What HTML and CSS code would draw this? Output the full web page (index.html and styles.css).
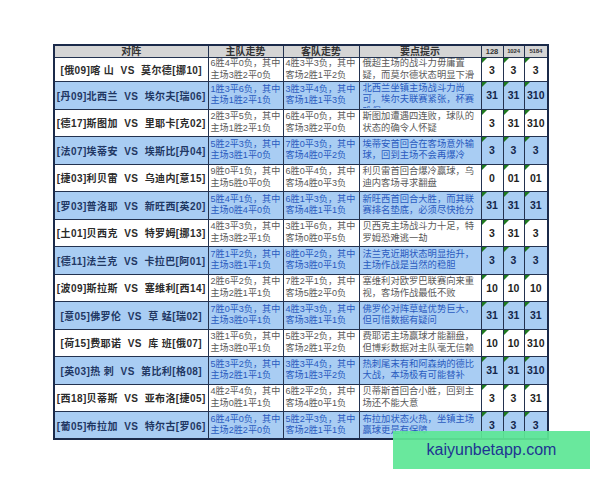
FILE: index.html
```html
<!DOCTYPE html>
<html lang="zh">
<head>
<meta charset="utf-8">
<title>对阵</title>
<link rel="stylesheet" href="styles.css">
</head>
<body>
<div class="page">
<table class="grid">
<colgroup>
<col class="w-m"><col class="w-h"><col class="w-a"><col class="w-t"><col class="w-n1"><col class="w-n2"><col class="w-n3">
</colgroup>
<thead>
<tr class="hd">
<th>对阵</th><th>主队走势</th><th>客队走势</th><th>要点提示</th><th class="s1">128</th><th class="s2">1024</th><th class="s2">5184</th>
</tr>
</thead>
<tbody>
<tr class="r w first">
<td class="m">[俄09]喀&nbsp;山&nbsp;&nbsp;VS&nbsp;&nbsp;莫尔德[挪10]</td>
<td class="f">6胜4平0负，其中<br>主场3胜2平0负</td>
<td class="f">4胜3平3负，其中<br>客场2胜1平2负</td>
<td class="t">俄超主场的战斗力毋庸置<br>疑，而莫尔德状态明显下滑</td>
<td class="n">3</td><td class="n">3</td><td class="n">3</td>
</tr>
<tr class="r b">
<td class="m">[丹09]北西兰&nbsp;&nbsp;VS&nbsp;&nbsp;埃尔夫[瑞06]</td>
<td class="f">1胜3平6负，其中<br>主场1胜2平1负</td>
<td class="f">3胜3平4负，其中<br>客场1胜1平3负</td>
<td class="t"><div class="clip">北西兰坐镇主场战斗力尚<br>可，埃尔夫联赛紧张，杯赛<br>难保</div></td>
<td class="n">31</td><td class="n">31</td><td class="n">310</td>
</tr>
<tr class="r w">
<td class="m">[德17]斯图加&nbsp;&nbsp;VS&nbsp;&nbsp;里耶卡[克02]</td>
<td class="f">2胜3平5负，其中<br>主场1胜2平1负</td>
<td class="f">6胜4平0负，其中<br>客场3胜2平0负</td>
<td class="t">斯图加遭遇四连败，球队的<br>状态的确令人怀疑</td>
<td class="n">3</td><td class="n">31</td><td class="n">310</td>
</tr>
<tr class="r b">
<td class="m">[法07]埃蒂安&nbsp;&nbsp;VS&nbsp;&nbsp;埃斯比[丹04]</td>
<td class="f">5胜2平3负，其中<br>主场3胜1平0负</td>
<td class="f">7胜0平3负，其中<br>客场4胜0平2负</td>
<td class="t">埃蒂安首回合在客场意外输<br>球，回到主场不会再爆冷</td>
<td class="n">3</td><td class="n">3</td><td class="n">3</td>
</tr>
<tr class="r w">
<td class="m">[捷03]利贝雷&nbsp;&nbsp;VS&nbsp;&nbsp;乌迪内[意15]</td>
<td class="f">9胜0平1负，其中<br>主场5胜0平0负</td>
<td class="f">6胜0平4负，其中<br>客场4胜0平3负</td>
<td class="t">利贝雷首回合爆冷赢球，乌<br>迪内客场寻求翻盘</td>
<td class="n">0</td><td class="n">01</td><td class="n">01</td>
</tr>
<tr class="r b">
<td class="m">[罗03]普洛耶&nbsp;&nbsp;VS&nbsp;&nbsp;新旺西[英20]</td>
<td class="f">5胜4平1负，其中<br>主场0胜4平0负</td>
<td class="f">6胜1平3负，其中<br>客场4胜1平1负</td>
<td class="t">新旺西首回合大胜，而其联<br>赛排名垫底，必须尽快抢分</td>
<td class="n">31</td><td class="n">31</td><td class="n">31</td>
</tr>
<tr class="r w">
<td class="m">[土01]贝西克&nbsp;&nbsp;VS&nbsp;&nbsp;特罗姆[挪13]</td>
<td class="f">4胜3平3负，其中<br>主场3胜2平1负</td>
<td class="f">3胜1平6负，其中<br>客场0胜0平5负</td>
<td class="t">贝西克主场战斗力十足，特<br>罗姆恐难逃一劫</td>
<td class="n">3</td><td class="n">31</td><td class="n">3</td>
</tr>
<tr class="r b">
<td class="m">[德11]法兰克&nbsp;&nbsp;VS&nbsp;&nbsp;卡拉巴[阿01]</td>
<td class="f">7胜1平2负，其中<br>主场3胜1平1负</td>
<td class="f">8胜0平2负，其中<br>客场3胜0平1负</td>
<td class="t">法兰克近期状态明显抬升，<br>主场作战是当然的稳胆</td>
<td class="n">3</td><td class="n">3</td><td class="n">3</td>
</tr>
<tr class="r w">
<td class="m">[波09]斯拉斯&nbsp;&nbsp;VS&nbsp;&nbsp;塞维利[西14]</td>
<td class="f">2胜6平2负，其中<br>主场2胜1平1负</td>
<td class="f">7胜2平1负，其中<br>客场5胜2平0负</td>
<td class="t">塞维利对欧罗巴联赛向来重<br>视，客场作战最低不败</td>
<td class="n">10</td><td class="n">10</td><td class="n">10</td>
</tr>
<tr class="r b">
<td class="m">[意05]佛罗伦&nbsp;&nbsp;VS&nbsp;&nbsp;草&nbsp;蜢[瑞02]</td>
<td class="f">7胜0平3负，其中<br>主场3胜0平1负</td>
<td class="f">4胜3平3负，其中<br>客场3胜1平1负</td>
<td class="t">佛罗伦对阵草蜢优势巨大，<br>但可惜数据有疑问</td>
<td class="n">31</td><td class="n">31</td><td class="n">31</td>
</tr>
<tr class="r w">
<td class="m">[荷15]费耶诺&nbsp;&nbsp;VS&nbsp;&nbsp;库&nbsp;班[俄07]</td>
<td class="f">3胜1平6负，其中<br>主场3胜0平1负</td>
<td class="f">5胜3平2负，其中<br>客场2胜1平2负</td>
<td class="t">费耶诺主场赢球才能翻盘，<br>但博彩数据对主队毫无信赖</td>
<td class="n">10</td><td class="n">10</td><td class="n">310</td>
</tr>
<tr class="r b">
<td class="m">[英03]热&nbsp;刺&nbsp;&nbsp;VS&nbsp;&nbsp;第比利[格08]</td>
<td class="f">5胜3平2负，其中<br>主场2胜1平1负</td>
<td class="f">3胜3平4负，其中<br>客场1胜3平2负</td>
<td class="t">热刺尾末有和阿森纳的德比<br>大战，本场极有可能替补</td>
<td class="n">31</td><td class="n">31</td><td class="n">310</td>
</tr>
<tr class="r w">
<td class="m">[西18]贝蒂斯&nbsp;&nbsp;VS&nbsp;&nbsp;亚布洛[捷05]</td>
<td class="f">4胜2平4负，其中<br>主场0胜1平1负</td>
<td class="f">6胜2平2负，其中<br>客场4胜0平1负</td>
<td class="t">贝蒂斯首回合小胜，回到主<br>场还不能大意</td>
<td class="n">3</td><td class="n">3</td><td class="n">31</td>
</tr>
<tr class="r b">
<td class="m">[葡05]布拉加&nbsp;&nbsp;VS&nbsp;&nbsp;特尔古[罗06]</td>
<td class="f">6胜4平0负，其中<br>主场2胜2平0负</td>
<td class="f">5胜2平3负，其中<br>客场2胜1平1负</td>
<td class="t">布拉加状态火热，坐镇主场<br>赢球更是有保障</td>
<td class="n">3</td><td class="n">3</td><td class="n">3</td>
</tr>
</tbody>
</table>
<div class="mark">kaiyunbetapp.com</div>
</div>
</body>
</html>
```
FILE: styles.css
```css
html, body {
  margin: 0;
  padding: 0;
  background: #ffffff;
}
body {
  font-family: "Liberation Sans", "Noto Sans CJK SC", sans-serif;
}
.page {
  position: relative;
  width: 600px;
  height: 480px;
  padding: 44px 0 0 53px;
  box-sizing: border-box;
}
.grid {
  border-collapse: collapse;
  table-layout: fixed;
  width: 494px;
  border: 2px solid #1b2a4a;
}
.w-m { width: 154px; }
.w-h { width: 75px; }
.w-a { width: 76px; }
.w-t { width: 122px; }
.w-n1 { width: 22px; }
.w-n2 { width: 21px; }
.w-n3 { width: 24px; }

.grid th, .grid td {
  border: 1px solid #23324f;
  padding: 0;
  overflow: hidden;
  white-space: nowrap;
}
.hd {
  height: 11px;
}
.hd th {
  background: #d5d5d5;
  color: #333333;
  font-size: 10px;
  font-weight: bold;
  line-height: 11px;
  text-align: center;
}
.hd th.s1 { font-size: 7.5px; }
.hd th.s2 { font-size: 6px; letter-spacing: -0.2px; }

.r { height: 27.5px; }
.r.first { height: 23px; }
.r.w { background: #ffffff; }
.r.b { background: #a9cdf3; }

.m {
  font-size: 10px;
  font-weight: bold;
  text-align: center;
  color: #2b2b2b;
  letter-spacing: 0.4px;
}
.r.b .m { color: #1f3763; }

.f, .t {
  font-size: 9.1px;
  line-height: 11.5px;
  padding-left: 2px !important;
  color: #5a5a5a;
  vertical-align: middle;
}
.t {
  padding-left: 3px !important;
  font-size: 9.3px;
}
.r.b .f, .r.b .t { color: #2a5bbf; }

.clip {
  height: 25px;
  overflow: hidden;
}

.n {
  position: relative;
  text-align: center;
  font-size: 10.5px;
  font-weight: bold;
  color: #1e1e1e;
}
.r.b .n { color: #14264a; }
.n::before {
  content: "";
  position: absolute;
  left: 0;
  top: 0;
  width: 0;
  height: 0;
  border-top: 5px solid #1f7a1f;
  border-right: 5px solid transparent;
}

.mark {
  position: absolute;
  left: 393px;
  top: 431px;
  width: 197px;
  height: 38px;
  background: rgba(94, 230, 150, 0.93);
  color: #1e3592;
  font-family: "Liberation Sans", sans-serif;
  font-size: 16px;
  line-height: 38px;
  text-align: center;
}
```
